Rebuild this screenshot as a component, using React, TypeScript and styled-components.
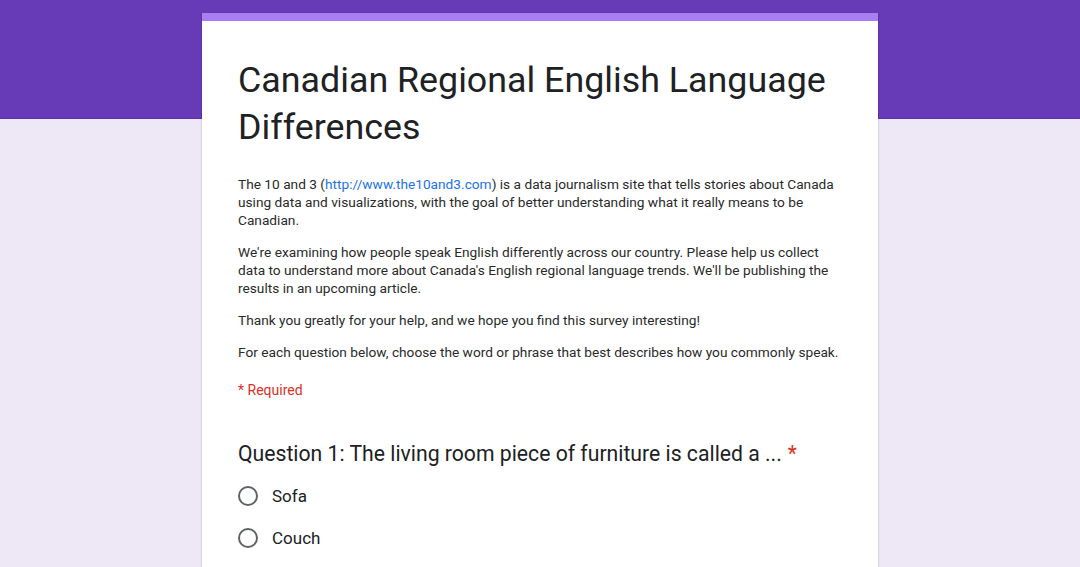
import React from "react";
import styled, { createGlobalStyle } from "styled-components";

const Global = createGlobalStyle`
  html, body { margin: 0; padding: 0; }
  body { background: #ede7f6; font-family: Roboto, "Noto Sans", Arial, sans-serif; color: #202124; }
`;

const Page = styled.div`
  position: relative;
  min-height: 567px;
  overflow: hidden;
`;

const Header = styled.div`
  position: absolute;
  left: 0;
  right: 0;
  top: 0;
  height: 118px;
  background: #673ab7;
  border-bottom: 1px solid #5e33a8;
`;

const Container = styled.div`
  position: relative;
  width: 676px;
  margin: 13px auto 0;
`;

const Card = styled.div`
  background: #fff;
  border-top: 8px solid #a87ef2;
  box-shadow: 0 1px 2px rgba(0, 0, 0, 0.25);
  padding: 36px 36px 40px;
`;

const Title = styled.h1`
  margin: 0;
  font-size: 35.8px;
  font-weight: 400;
  line-height: 47px;
  color: #202124;
`;

const Description = styled.div`
  margin-top: 24px;
  font-size: 13.7px;
  line-height: 18px;
  color: #2a2a2a;
`;

const Para = styled.p`
  margin: 0 0 14px;
  &:last-child { margin-bottom: 0; }
`;

const Link = styled.a`
  color: #1a73e8;
  text-decoration: none;
`;

const Required = styled.div`
  margin-top: 20px;
  font-size: 14px;
  line-height: 18px;
  color: #d93025;
`;

const Question = styled.div`
  margin-top: 41px;
`;

const QuestionTitle = styled.div`
  font-size: 21.2px;
  line-height: 28px;
  color: #202124;
`;

const Star = styled.span`
  color: #d93025;
  margin-left: 6px;
`;

const Options = styled.div`
  margin-top: 16px;
  display: flex;
  flex-direction: column;
  gap: 18px;
`;

const Option = styled.label`
  display: flex;
  align-items: center;
  gap: 14px;
  height: 24px;
  font-size: 17px;
  color: #202124;
`;

const Radio = styled.span`
  width: 16px;
  height: 16px;
  border: 2px solid #5f6368;
  border-radius: 50%;
  flex: none;
`;

export default function App() {
  return (
    <Page>
      <Global />
      <Header />
      <Container>
        <Card>
          <Title>Canadian Regional English Language Differences</Title>
          <Description>
            <Para>
              The 10 and 3 (<Link href="#">http://www.the10and3.com</Link>) is a data journalism site that tells
              stories about Canada using data and visualizations, with the goal of better understanding what it
              really means to be Canadian.
            </Para>
            <Para>
              We're examining how people speak English differently across our country. Please help us collect data
              to understand more about Canada's English regional language trends. We'll be publishing the results in
              an upcoming article.
            </Para>
            <Para>Thank you greatly for your help, and we hope you find this survey interesting!</Para>
            <Para>For each question below, choose the word or phrase that best describes how you commonly speak.</Para>
          </Description>
          <Required>* Required</Required>
          <Question>
            <QuestionTitle>
              Question 1: The living room piece of furniture is called a ...<Star>*</Star>
            </QuestionTitle>
            <Options>
              <Option>
                <Radio />
                Sofa
              </Option>
              <Option>
                <Radio />
                Couch
              </Option>
            </Options>
          </Question>
        </Card>
      </Container>
    </Page>
  );
}
